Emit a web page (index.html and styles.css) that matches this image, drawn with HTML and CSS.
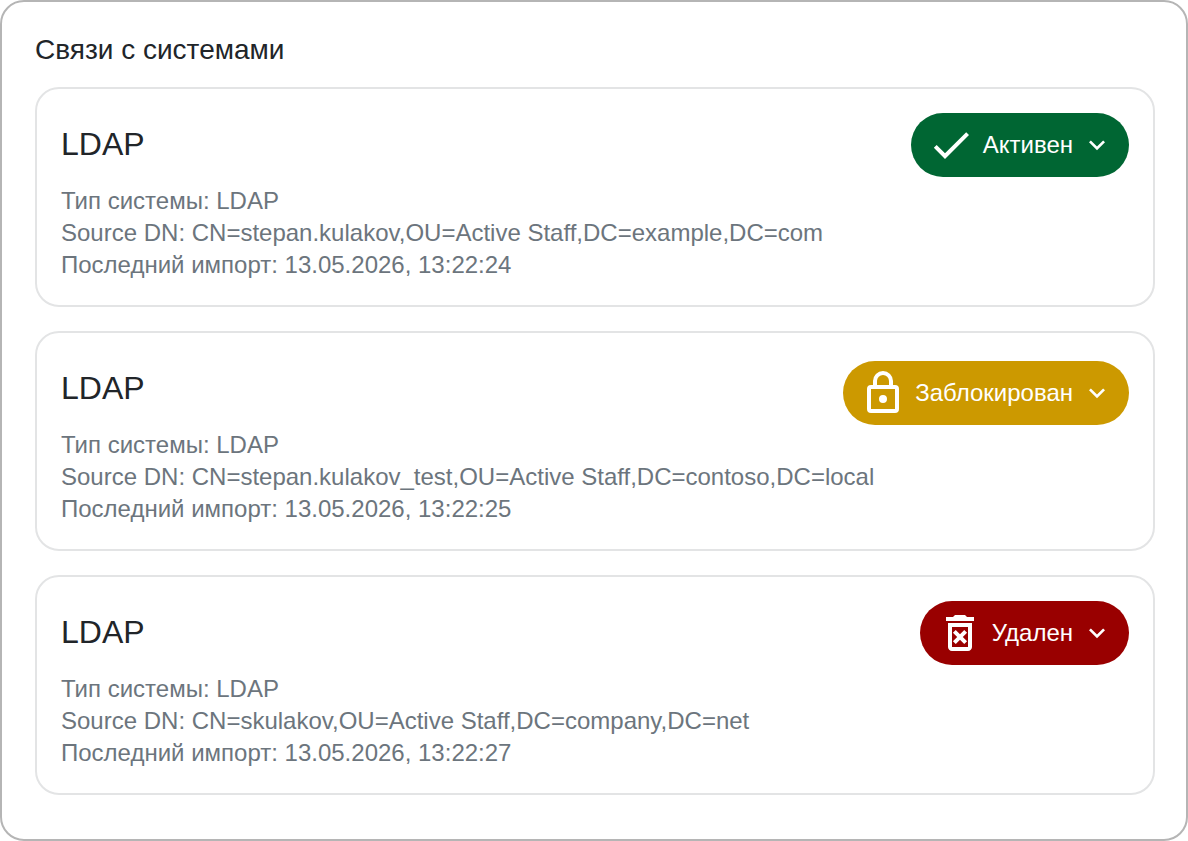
FILE: index.html
```html
<!DOCTYPE html>
<html lang="ru">
<head>
    <meta charset="UTF-8">
    <meta name="viewport" content="width=device-width, initial-scale=1.0">
    <title>Связи с системами</title>
    <link rel="stylesheet" href="styles.css">
</head>
<body>

    <main class="panel">
        <h1 class="panel-title">Связи с системами</h1>

        <div class="links">
            <section class="card">
                <div class="card-head">
                    <h2 class="card-title">LDAP</h2>
                    <button type="button" class="status active">
                        <svg class="icon" viewBox="0 0 24 24" aria-hidden="true"><path d="M9 16.17L4.83 12l-1.42 1.41L9 19 21 7l-1.41-1.41z"/></svg>
                        <span>Активен</span>
                        <svg class="arrow" viewBox="0 0 24 24" aria-hidden="true"><path d="M16.59 8.59L12 13.17 7.41 8.59 6 10l6 6 6-6z"/></svg>
                    </button>
                </div>
                <p>Тип системы: LDAP</p>
                <p>Source DN: CN=stepan.kulakov,OU=Active Staff,DC=example,DC=com</p>
                <p>Последний импорт: 13.05.2026, 13:22:24</p>
            </section>

            <section class="card">
                <div class="card-head">
                    <h2 class="card-title">LDAP</h2>
                    <button type="button" class="status blocked">
                        <svg class="icon" viewBox="0 0 24 24" aria-hidden="true"><path d="M12 17a2 2 0 1 1 0-4 2 2 0 0 1 0 4M18 20V10H6v10h12M18 8a2 2 0 0 1 2 2v10a2 2 0 0 1-2 2H6a2 2 0 0 1-2-2V10a2 2 0 0 1 2-2h1V6a5 5 0 0 1 10 0v2h1M12 3a3 3 0 0 0-3 3v2h6V6a3 3 0 0 0-3-3z"/></svg>
                        <span>Заблокирован</span>
                        <svg class="arrow" viewBox="0 0 24 24" aria-hidden="true"><path d="M16.59 8.59L12 13.17 7.41 8.59 6 10l6 6 6-6z"/></svg>
                    </button>
                </div>
                <p>Тип системы: LDAP</p>
                <p>Source DN: CN=stepan.kulakov_test,OU=Active Staff,DC=contoso,DC=local</p>
                <p>Последний импорт: 13.05.2026, 13:22:25</p>
            </section>

            <section class="card">
                <div class="card-head">
                    <h2 class="card-title">LDAP</h2>
                    <button type="button" class="status deleted">
                        <svg class="icon" viewBox="0 0 24 24" aria-hidden="true"><path fill-rule="evenodd" d="M14.12 10.47L12 12.59l-2.13-2.12-1.41 1.41L10.59 14l-2.12 2.12 1.41 1.41L12 15.41l2.12 2.12 1.41-1.41L13.41 14l2.12-2.12zM15.5 4l-1-1h-5l-1 1H5v2h14V4zM6 19c0 1.1.9 2 2 2h8c1.1 0 2-.9 2-2V7H6v12zM8 9h8v10H8V9z"/></svg>
                        <span>Удален</span>
                        <svg class="arrow" viewBox="0 0 24 24" aria-hidden="true"><path d="M16.59 8.59L12 13.17 7.41 8.59 6 10l6 6 6-6z"/></svg>
                    </button>
                </div>
                <p>Тип системы: LDAP</p>
                <p>Source DN: CN=skulakov,OU=Active Staff,DC=company,DC=net</p>
                <p>Последний импорт: 13.05.2026, 13:22:27</p>
            </section>
        </div>
    </main>

</body>
</html>
```

FILE: styles.css
```css
* {
    box-sizing: border-box;
}

body {
    margin: 0;
    background-color: white;
    color: #212529;
    font-family: "Liberation Sans", Arial, sans-serif;
}

.panel {
    padding: 32px 31px 44px 33px;
    border: 2px solid #b5b5b5;
    border-radius: 24px;
}

.panel-title {
    margin: 0 0 21px;
    font-size: 28px;
    font-weight: normal;
    line-height: 32px;
}

.links {
    display: flex;
    flex-direction: column;
    gap: 24px;
}

.card {
    padding: 24px;
    border: 2px solid #e3e4e5;
    border-radius: 24px;
}

.card-head {
    display: flex;
    justify-content: space-between;
    align-items: flex-start;
    min-height: 72px;
}

.card-title {
    margin: 0;
    font-size: 32px;
    font-weight: normal;
    line-height: 62px;
}

.card p {
    margin: 0;
    color: #6c757d;
    font-size: 24px;
    line-height: 32px;
}

.status {
    display: flex;
    align-items: center;
    gap: 8px;
    padding: 8px 16px;
    border: none;
    border-radius: 32px;
    color: white;
    font-family: inherit;
    font-size: 24px;
    white-space: nowrap;
    cursor: pointer;
}

.status svg {
    fill: currentColor;
}

.icon {
    width: 48px;
    height: 48px;
}

.arrow {
    width: 32px;
    height: 32px;
}

.active {
    background-color: #006633;
}

.blocked {
    align-self: center;
    background-color: #cc9900;
}

.deleted {
    background-color: #990000;
}
```
